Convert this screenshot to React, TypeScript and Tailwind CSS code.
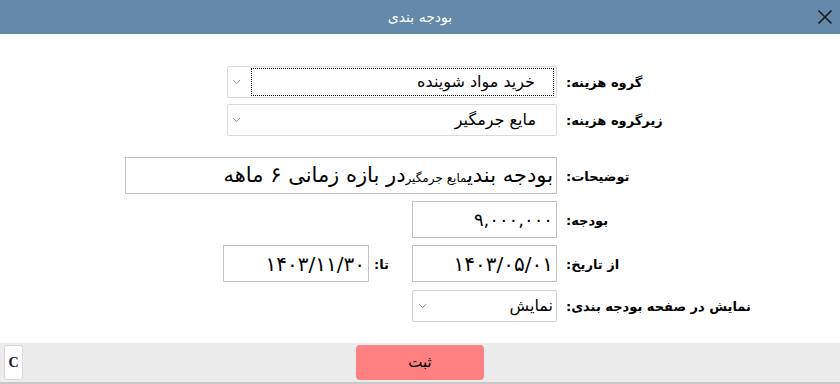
import React from 'react'

const font = { fontFamily: '"DejaVu Sans", Tahoma, sans-serif' }

function Chevron() {
  return (
    <svg width="9" height="6" viewBox="0 0 9 6" className="shrink-0">
      <path d="M1 1.2 L4.5 4.6 L8 1.2" fill="none" stroke="#8a8a8a" strokeWidth="1" />
    </svg>
  )
}

function Combo({ value, width, focused }: { value: string; width: string; focused?: boolean }) {
  return (
    <div className={`${width} h-[32px] border border-[#dadada] rounded-[2px] bg-white flex items-center pl-[4px] pr-[2px]`}>
      <Chevron />
      <div className={`ml-[10px] flex-1 h-[28px] flex items-center justify-end pr-[18px] ${focused ? 'border border-dotted border-black' : ''}`}>
        <span dir="rtl" className="text-[16px] text-black">{value}</span>
      </div>
    </div>
  )
}

function Box({ children, width, height, textClass }: { children: React.ReactNode; width: string; height: string; textClass: string }) {
  return (
    <div className={`${width} ${height} border border-[#c4c4c4] bg-white flex items-center justify-end pr-[3px]`}>
      <span dir="rtl" className={`${textClass} text-black whitespace-nowrap`}>{children}</span>
    </div>
  )
}

function Label({ text }: { text: string }) {
  return <span dir="rtl" className="text-[13px] font-bold text-black whitespace-nowrap">{text}</span>
}

export default function App() {
  return (
    <div style={font} className="w-[840px] h-[384px] bg-white flex flex-col overflow-hidden">
      {/* Title bar */}
      <div className="h-[34px] bg-[#6489aa] flex items-center relative shrink-0">
        <p dir="rtl" className="flex-1 text-center text-white text-[14px]">بودجه بندی</p>
        <svg width="16" height="16" viewBox="0 0 16 16" className="absolute right-[7px] top-[9px]">
          <path d="M1.5 1.5 L14.5 14.5 M14.5 1.5 L1.5 14.5" stroke="#1a1a1a" strokeWidth="1.6" />
        </svg>
      </div>

      {/* Form */}
      <div className="flex-1 pt-[32px]">
        <div className="grid grid-cols-[557px_auto] gap-x-[9px] items-center">
          <div className="flex justify-end"><Combo value="خرید مواد شوینده" width="w-[330px]" focused /></div>
          <div><Label text="گروه هزینه:" /></div>

          <div className="flex justify-end mt-[6px]"><Combo value="مایع جرمگیر" width="w-[330px]" /></div>
          <div className="mt-[6px]"><Label text="زیرگروه هزینه:" /></div>

          <div className="flex justify-end mt-[21px]">
            <Box width="w-[432px]" height="h-[37px]" textClass="text-[21px]">
              بودجه بندی<span className="text-[12px]">مایع جرمگیر</span>در بازه زمانی ۶ ماهه
            </Box>
          </div>
          <div className="mt-[21px]"><Label text="توضیحات:" /></div>

          <div className="flex justify-end mt-[7px]">
            <Box width="w-[145px]" height="h-[37px]" textClass="text-[18px]">۹,۰۰۰,۰۰۰</Box>
          </div>
          <div className="mt-[7px]"><Label text="بودجه:" /></div>

          <div className="flex justify-end items-center mt-[7px]">
            <Box width="w-[146px]" height="h-[37px]" textClass="text-[20px]">۱۴۰۳/۱۱/۳۰</Box>
            <span className="ml-[5px] mr-[23px]"><Label text="تا:" /></span>
            <Box width="w-[145px]" height="h-[37px]" textClass="text-[20px]">۱۴۰۳/۰۵/۰۱</Box>
          </div>
          <div className="mt-[7px]"><Label text="از تاریخ:" /></div>

          <div className="flex justify-end mt-[8px]">
            <div className="w-[145px] h-[32px] border border-[#d4d4d4] rounded-[2px] bg-white flex items-center pl-[5px] pr-[3px]">
              <Chevron />
              <span dir="rtl" className="flex-1 text-right text-[16px] text-black">نمایش</span>
            </div>
          </div>
          <div className="mt-[8px]"><Label text="نمایش در صفحه بودجه بندی:" /></div>
        </div>
      </div>

      {/* Footer */}
      <div className="h-[41px] bg-[#ececec] border-b-[2px] border-[#c8c8c8] flex items-start pt-[2px] relative shrink-0">
        <button className="ml-[4px] w-[19px] h-[35px] bg-white border border-[#d8d8d8] rounded-[3px] flex items-center justify-center text-[14px] font-bold text-[#111133]" style={{ fontFamily: '"Liberation Serif", serif' }}>
          C
        </button>
        <button dir="rtl" className="ml-[333px] w-[128px] h-[35px] bg-[#ff8080] rounded-[4px] text-[15px] text-black">
          ثبت
        </button>
      </div>
    </div>
  )
}
